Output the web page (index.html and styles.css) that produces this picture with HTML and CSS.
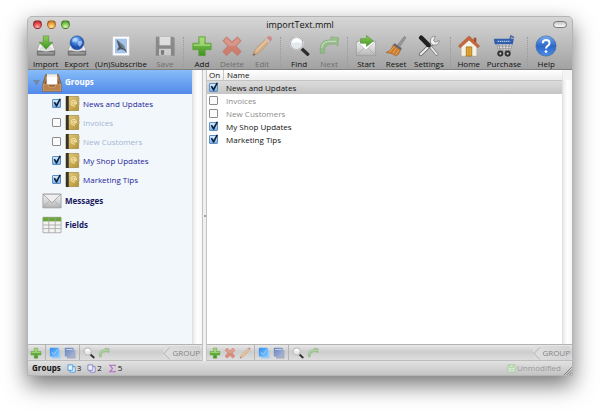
FILE: index.html
```html
<!DOCTYPE html>
<html lang="en">
<head>
<meta charset="utf-8">
<title>importText.mml</title>
<link rel="stylesheet" href="styles.css">
</head>
<body>
<svg class="defs" aria-hidden="true">
  <defs>
    <linearGradient id="gGreen" x2="0" y2="1"><stop offset="0" stop-color="#8fcf5a"/><stop offset="1" stop-color="#3f9424"/></linearGradient>
    <linearGradient id="gMetal" x2="0" y2="1"><stop offset="0" stop-color="#f8f8f8"/><stop offset="1" stop-color="#b4b4b4"/></linearGradient>
    <radialGradient id="gBlue" cx=".45" cy=".3"><stop offset="0" stop-color="#b5dcff"/><stop offset=".5" stop-color="#4a88df"/><stop offset="1" stop-color="#1d4fae"/></radialGradient>
    <linearGradient id="gHelp" x2="0" y2="1"><stop offset="0" stop-color="#78aef0"/><stop offset=".5" stop-color="#2c67c8"/><stop offset="1" stop-color="#4b8ee8"/></linearGradient>
    <linearGradient id="gGold" x2="1" y2="1"><stop offset="0" stop-color="#e4cf85"/><stop offset="1" stop-color="#b6922f"/></linearGradient>
    <linearGradient id="gTray" x2="0" y2="1"><stop offset="0" stop-color="#c08a55"/><stop offset="1" stop-color="#8d5526"/></linearGradient>
    <linearGradient id="gSky" x2="1" y2="1"><stop offset="0" stop-color="#2f8df0"/><stop offset="1" stop-color="#7fc6ff"/></linearGradient>
    <linearGradient id="gSlate" x2="1" y2="1"><stop offset="0" stop-color="#6780b8"/><stop offset="1" stop-color="#a9b8db"/></linearGradient>
  </defs>
  <symbol id="drive" viewBox="0 0 24 24">
    <path d="M5 9h14l3 9H2z" fill="#f4f4f4" stroke="#a5a5a5" stroke-width=".8"/>
    <path d="M2 17h20v4.500q0 1-1 1H3q-1 0-1-1z" fill="#747474"/>
    <path d="M3.500 18.500h17v2.500h-17z" fill="#979797"/>
    <ellipse cx="12" cy="15" rx="7" ry="3" fill="#ddd"/>
  </symbol>
  <symbol id="import" viewBox="0 0 24 24">
    <use href="#drive"/>
    <path d="M9 1h6v7h4.500L12 15.500 4.500 8H9z" fill="url(#gGreen)" stroke="#4c8b2d" stroke-width=".6"/>
  </symbol>
  <symbol id="export" viewBox="0 0 24 24">
    <use href="#drive"/>
    <circle cx="12" cy="8.500" r="7.600" fill="url(#gBlue)" stroke="#244f96" stroke-width=".5"/>
    <path d="M7 4q3-2 5 0l-2 3-3 1zM13 7l4-1 1 3-3 4-2-3z" fill="#d4ebff" opacity=".6"/>
  </symbol>
  <symbol id="stamp" viewBox="0 0 24 24">
    <path d="M3 1.500h18v21H3z" fill="#fff" stroke="#c4c8d0" stroke-width="1.200" stroke-dasharray="1.400 1.100"/>
    <path d="M5.500 4h13v16h-13z" fill="#a4c4e8"/>
    <path d="M7 5l5 4 3 3 3.500 7-4-3-3-.5-4 1.500 2-4z" fill="#4a5564"/>
    <path d="M9 7l6 4 2 5-4-2.500z" fill="#75808f"/>
  </symbol>
  <symbol id="floppy" viewBox="0 0 24 24">
    <path d="M2 2h19l1.500 1.500v19H2z" fill="#6a6a6a"/>
    <path d="M6 2h12v9H6z" fill="#f4f4f4"/>
    <path d="M6 11h12v1H6z" fill="#999"/>
    <path d="M5.500 15h13v7.500h-13z" fill="#ddd"/>
    <path d="M7.500 16.500h3.500v5H7.500z" fill="#555"/>
  </symbol>
  <symbol id="plus" viewBox="0 0 24 24">
    <path d="M8.500 2h7v7H22v7h-6.500v6.500h-7V16H2V9h6.500z" fill="url(#gGreen)" stroke="#5a9f3b" stroke-width=".8"/>
    <path d="M9.500 3h5v7H21v2H3v-2h6.500z" fill="#c0e89a" opacity=".55"/>
  </symbol>
  <symbol id="cross" viewBox="0 0 24 24">
    <path d="M6 2l6 5.500L18 2l4 4.500-5.500 5.500 5.500 6-4 4.500-6-5.500-6 5.500-4-4.500L7.500 12 2 6.500z" fill="#dd5b42" stroke="#c54e3a" stroke-width=".8"/>
    <path d="M6 3.500l6 5.500 6-5.500 2.500 3L15 12H9L3.500 6.500z" fill="#f49a83" opacity=".6"/>
  </symbol>
  <symbol id="pencil" viewBox="0 0 24 24">
    <path d="M2 22.500l2-6L17 3l4 4L8 20z" fill="#eda765" stroke="#b9783e" stroke-width=".7"/>
    <path d="M5.500 17.500L18 5" stroke="#ffd7a4" stroke-width="1.400"/>
    <path d="M17 3l1.500-1.500q2-1 3.500.500t.500 3.500L21 7z" fill="#d9646a"/>
    <path d="M15.500 4.500L17 3l4 4-1.500 1.500z" fill="#ccc"/>
    <path d="M2 22.500l1-3 2 2z" fill="#333"/>
  </symbol>
  <symbol id="lens" viewBox="0 0 24 24">
    <path d="M15 15l6.500 6" stroke="#2d2d2d" stroke-width="3.600" stroke-linecap="round"/>
    <circle cx="9.500" cy="9" r="7.400" fill="#e3e9ec" stroke="#9a9a9a" stroke-width="1.800"/>
    <path d="M4 9q1-5.500 6-5.500 4.500 1 5 5.500-5-2-11 0z" fill="#fff"/>
    <circle cx="9.500" cy="9" r="7.600" fill="none" stroke="#eee" stroke-width=".8"/>
  </symbol>
  <symbol id="redo" viewBox="0 0 24 24">
    <path d="M2.500 20Q1 6 11 5.500h3V2l8.500 1-1 9-3-2.500-3 .5Q7 9 6.500 20z" fill="#7fbf6b" stroke="#559c46" stroke-width=".7"/>
    <path d="M4 14q1-7 8-7h8" fill="none" stroke="#c8eabb" stroke-width="1.200"/>
  </symbol>
  <symbol id="send" viewBox="0 0 24 24">
    <path d="M1.500 7h21v15.500h-21z" fill="url(#gMetal)" stroke="#999" stroke-width=".8"/>
    <path d="M2 22l8-8M22 22l-8-8" stroke="#aaa" stroke-width=".9"/>
    <path d="M1.500 7h21L12 16.500z" fill="#fff" stroke="#aaa" stroke-width=".8"/>
    <path d="M6 4h6.500V.5L20 6.500l-7.500 6V9H6z" fill="url(#gGreen)" stroke="#4c8b2d" stroke-width=".6"/>
  </symbol>
  <symbol id="broom" viewBox="0 0 24 24">
    <path d="M14 10.500l7-9 2 1.500-6.500 9z" fill="#999" stroke="#666" stroke-width=".5"/>
    <path d="M10.500 9l8 5.500-1.500 2L9 11z" fill="#5b6575"/>
    <path d="M9 10.500l8 6q-1 4-5 6.500-3-3-11-4 6-2 8-8.500z" fill="#c97c30" stroke="#9a571b" stroke-width=".5"/>
    <path d="M10 13l-5 5.500M12.500 14.500l-4 5.500M15 16.500l-3.500 5" stroke="#f0b46c" stroke-width=".9"/>
  </symbol>
  <symbol id="tools" viewBox="0 0 24 24">
    <path d="M12 11l8.500 10" stroke="#858585" stroke-width="3.600" stroke-linecap="round"/>
    <path d="M12 11l8.500 10" stroke="#eee" stroke-width="1.800" stroke-linecap="round"/>
    <path d="M3 21l13.500-13" stroke="#666" stroke-width="4" stroke-linecap="round"/>
    <path d="M3 21l13.500-13" stroke="#f0f0f0" stroke-width="2.200" stroke-linecap="round"/>
    <path d="M3.500 3l8 8" stroke="#202020" stroke-width="5" stroke-linecap="round"/>
    <path d="M19 1.500q-5-.5-5.500 5 0 4.500 4.500 4.500 5 0 5-5l-4 2-2-2z" fill="#f0f0f0" stroke="#777" stroke-width=".8"/>
  </symbol>
  <symbol id="home" viewBox="0 0 24 24">
    <path d="M17 3h3v5h-3z" fill="#a6512f"/>
    <path d="M3.500 11L12 4l8.500 7v12h-17z" fill="#f6f1e5" stroke="#b8aa92" stroke-width=".6"/>
    <path d="M0.500 12L12 1l11.500 11-2 2L12 5.500 2.500 14z" fill="#c7683b" stroke="#90401e" stroke-width=".5"/>
    <path d="M9 13h6v10H9z" fill="#e4a72c" stroke="#8e6728" stroke-width=".8"/>
    <path d="M12 13v10" stroke="#b87f24" stroke-width=".6"/>
  </symbol>
  <symbol id="cart" viewBox="0 0 24 24">
    <path d="M18.500 5l1-4 3.500 2" fill="none" stroke="#5270a4" stroke-width="1.800"/>
    <path d="M3.500 8h18L19 17H6z" fill="#dedede" stroke="#888" stroke-width=".7"/>
    <path d="M6 9l2 8M10 9l1 8M14 9v8M18 9l-1 8M5 12h15M6 15h13" stroke="#888" stroke-width=".8"/>
    <path d="M1 5.500q0-1.500 1-1.500h19.500q1.500 0 1 1.500l-1 4.500H2z" fill="#315fae"/>
    <path d="M5 7h14" stroke="#b7cdf0" stroke-width="1.400" stroke-dasharray="1.500 .8"/>
    <circle cx="8" cy="20.300" r="3.300" fill="#333"/><circle cx="16" cy="20.300" r="3.300" fill="#333"/>
    <circle cx="8" cy="20.300" r="1.200" fill="#ccc"/><circle cx="16" cy="20.300" r="1.200" fill="#ccc"/>
  </symbol>
  <symbol id="help" viewBox="0 0 24 24">
    <circle cx="12" cy="12" r="11" fill="url(#gHelp)" stroke="#3a62a8" stroke-width=".7"/>
    <path d="M8.500 9q0-3.500 3.700-3.500T15.800 9q0 1.700-2 2.800-1.700 1-1.700 3" fill="none" stroke="#fff" stroke-width="2.200"/>
    <circle cx="12" cy="18" r="1.500" fill="#fff"/>
  </symbol>
  <symbol id="tray" viewBox="0 0 24 24">
    <path d="M4.500 2.500h15L23 14v8.500H1V14z" fill="url(#gTray)" stroke="#7c4a22" stroke-width=".8"/>
    <path d="M6.500 4h11l3 10.500h-17z" fill="#6a3e1d"/>
    <path d="M6 2h12v5H6z" fill="#eee"/><path d="M5.500 5.500h13v9h-13z" fill="#fff"/>
    <path d="M1.500 14h5.500l1.500 3.500h7L17 14h5.500v8h-21z" fill="#b98350" stroke="#e1bb8c" stroke-width=".7"/>
  </symbol>
  <symbol id="book" viewBox="0 0 16 18">
    <path d="M1 1.500h13.500v15H1z" fill="url(#gGold)" stroke="#8f752c" stroke-width=".6"/>
    <path d="M1 1h3v16H1z" fill="#38332a"/>
    <circle cx="9.300" cy="8.700" r="1.300" fill="none" stroke="#fff3c7" stroke-width=".8"/>
    <path d="M10.600 7.200v2.300q1.600.8 1.700-1-.2-3-3-3-3 .3-3 3.300.3 3 3.300 3h1.200" fill="none" stroke="#fff3c7" stroke-width=".8"/>
    <path d="M14.500 3h1v3h-1zM14.500 7.500h1v3h-1z" fill="#c9bb91"/>
  </symbol>
  <symbol id="mail" viewBox="0 0 22 18">
    <path d="M1 1.500h20v15H1z" fill="url(#gMetal)" stroke="#9b9b9b" stroke-width=".9"/>
    <path d="M1 16.500l7.500-8M21 16.500l-7.500-8" stroke="#aaa" stroke-width=".9"/>
    <path d="M1 1.500h20L11 11z" fill="#eee" stroke="#999" stroke-width=".9"/>
  </symbol>
  <symbol id="grid" viewBox="0 0 22 18">
    <path d="M1 .5h20v17H1z" fill="#f3f3f1" stroke="#999" stroke-width=".8"/>
    <path d="M1 .5h20V5H1z" fill="#6ba53c"/>
    <path d="M1 9h20M1 13h20M7.500 1v16.500M14.500 1v16.500" stroke="#a3a3a3" stroke-width=".9"/>
  </symbol>
  <symbol id="checkall" viewBox="0 0 12 12">
    <path d="M3 3h8.500v8.500H3z" fill="#9bcdf8"/>
    <rect x=".8" y=".8" width="9" height="9" rx="1" fill="url(#gSky)"/>
    <path d="M3 5l2 2.500L9 2" fill="none" stroke="#a8d6fb" stroke-width=".8"/>
  </symbol>
  <symbol id="uncheckall" viewBox="0 0 12 12">
    <path d="M3 3h8.500v8.500H3z" fill="#a5acc2"/>
    <rect x=".8" y=".8" width="9" height="9" rx="1" fill="url(#gSlate)"/>
    <path d="M2 2.500h6.500" stroke="#c4d2ec"/>
  </symbol>
  <symbol id="pages" viewBox="0 0 10 10">
    <path d="M3.500 3h5.500v6H3.500z" fill="#fff" stroke="currentColor"/>
    <path d="M1 1h5.500v6H1z" fill="#e6f2fc" stroke="currentColor"/>
  </symbol>
  <symbol id="sigma" viewBox="0 0 10 10">
    <path d="M8 2.500V1.300H2L5 5 2 8.700h6V7.500" fill="none" stroke="#b26ac8" stroke-width="1.200"/>
  </symbol>
  <symbol id="saved" viewBox="0 0 10 10">
    <path d="M1 1h8v8H1z" fill="#d9ebd4" stroke="#a6cc9e"/>
    <path d="M3 1v3h4V1M3 6.500h4" fill="none" stroke="#a6cc9e"/>
  </symbol>
</svg>

<main class="window">
  <header class="chrome">
    <div class="titlebar">
      <div class="lights">
        <button class="light red" aria-label="Close"></button>
        <button class="light amber" aria-label="Minimize"></button>
        <button class="light green" aria-label="Zoom"></button>
      </div>
      <h1>importText.mml</h1>
      <button class="pill" aria-label="Toggle toolbar"></button>
    </div>
    <nav class="toolbar">
      <button class="tool"><svg><use href="#import"/></svg>Import</button>
      <button class="tool"><svg><use href="#export"/></svg>Export</button>
      <button class="tool"><svg><use href="#stamp"/></svg>(Un)Subscribe</button>
      <button class="tool" disabled><svg><use href="#floppy"/></svg>Save</button>
      <span class="sep"></span>
      <button class="tool"><svg><use href="#plus"/></svg>Add</button>
      <button class="tool" disabled><svg><use href="#cross"/></svg>Delete</button>
      <button class="tool" disabled><svg><use href="#pencil"/></svg>Edit</button>
      <span class="sep"></span>
      <button class="tool"><svg><use href="#lens"/></svg>Find</button>
      <button class="tool" disabled><svg><use href="#redo"/></svg>Next</button>
      <span class="sep"></span>
      <button class="tool"><svg><use href="#send"/></svg>Start</button>
      <button class="tool"><svg><use href="#broom"/></svg>Reset</button>
      <button class="tool"><svg><use href="#tools"/></svg>Settings</button>
      <span class="sep"></span>
      <button class="tool"><svg><use href="#home"/></svg>Home</button>
      <button class="tool"><svg><use href="#cart"/></svg>Purchase</button>
      <span class="sep"></span>
      <button class="tool"><svg><use href="#help"/></svg>Help</button>
    </nav>
  </header>

  <div class="panes">
    <section class="pane source">
      <div class="scroller">
        <div class="tree">
          <div class="branch selected"><span class="arrow"></span><svg class="big"><use href="#tray"/></svg>Groups</div>
          <ul>
            <li><input type="checkbox" id="g1" checked><label for="g1"><svg><use href="#book"/></svg>News and Updates</label></li>
            <li class="off"><input type="checkbox" id="g2"><label for="g2"><svg><use href="#book"/></svg>Invoices</label></li>
            <li class="off"><input type="checkbox" id="g3"><label for="g3"><svg><use href="#book"/></svg>New Customers</label></li>
            <li><input type="checkbox" id="g4" checked><label for="g4"><svg><use href="#book"/></svg>My Shop Updates</label></li>
            <li><input type="checkbox" id="g5" checked><label for="g5"><svg><use href="#book"/></svg>Marketing Tips</label></li>
          </ul>
          <div class="branch"><span class="arrow none"></span><svg class="mid"><use href="#mail"/></svg>Messages</div>
          <div class="branch"><span class="arrow none"></span><svg class="mid"><use href="#grid"/></svg>Fields</div>
        </div>
        <div class="track"></div>
      </div>
      <div class="actions">
        <button aria-label="Add"><svg><use href="#plus"/></svg></button>
        <span class="rule"></span>
        <button aria-label="Check all"><svg><use href="#checkall"/></svg></button>
        <button aria-label="Uncheck all"><svg><use href="#uncheckall"/></svg></button>
        <span class="rule"></span>
        <button aria-label="Find"><svg><use href="#lens"/></svg></button>
        <button aria-label="Next" disabled><svg><use href="#redo"/></svg></button>
        <span class="crumb">GROUP</span>
      </div>
    </section>
    <div class="splitter"></div>
    <section class="pane detail">
      <div class="scroller">
        <div class="list">
          <table>
            <thead><tr><th class="on">On</th><th>Name</th></tr></thead>
            <tbody>
              <tr class="current"><td><input type="checkbox" id="r1" checked></td><td><label for="r1">News and Updates</label></td></tr>
              <tr class="off"><td><input type="checkbox" id="r2"></td><td><label for="r2">Invoices</label></td></tr>
              <tr class="off"><td><input type="checkbox" id="r3"></td><td><label for="r3">New Customers</label></td></tr>
              <tr><td><input type="checkbox" id="r4" checked></td><td><label for="r4">My Shop Updates</label></td></tr>
              <tr><td><input type="checkbox" id="r5" checked></td><td><label for="r5">Marketing Tips</label></td></tr>
            </tbody>
          </table>
        </div>
        <div class="track headed"></div>
      </div>
      <div class="actions">
        <button aria-label="Add"><svg><use href="#plus"/></svg></button>
        <button aria-label="Delete" disabled><svg><use href="#cross"/></svg></button>
        <button aria-label="Edit" disabled><svg><use href="#pencil"/></svg></button>
        <span class="rule"></span>
        <button aria-label="Check all"><svg><use href="#checkall"/></svg></button>
        <button aria-label="Uncheck all"><svg><use href="#uncheckall"/></svg></button>
        <span class="rule"></span>
        <button aria-label="Find"><svg><use href="#lens"/></svg></button>
        <button aria-label="Next" disabled><svg><use href="#redo"/></svg></button>
        <span class="crumb">GROUP</span>
      </div>
    </section>
  </div>

  <footer class="status">
    <strong>Groups</strong>
    <span class="count blue"><svg><use href="#pages"/></svg>3</span>
    <span class="count violet"><svg><use href="#pages"/></svg>2</span>
    <span class="count"><svg><use href="#sigma"/></svg>5</span>
    <span class="state"><svg><use href="#saved"/></svg>Unmodified</span>
    <svg class="grip" viewBox="0 0 10 10"><path d="M1 10l9-9M4 10l6-6M7 10l3-3" stroke="#777" stroke-width="1"/></svg>
  </footer>
</main>
</body>
</html>
```
FILE: styles.css
```css
* { box-sizing: border-box; }

body {
  margin: 0;
  min-height: 100vh;
  display: flex;
  padding: 16px 27px 38px 27px;
  background: #fff;
  color: #111;
  font: 500 8px/12px "Open Sans", "Noto Sans", sans-serif;
}

.defs { position: absolute; width: 0; height: 0; }

button {
  border: 0;
  padding: 0;
  background: none;
  font: inherit;
  color: inherit;
}

.window {
  flex: 1;
  min-width: 0;
  display: flex;
  flex-direction: column;
  border: 1px solid #b4b4b4;
  border-radius: 5px 5px 0 0;
  background: #d0d0d0;
  box-shadow: 0 9px 22px rgba(0, 0, 0, .55);
}

/* Title bar and toolbar */
.chrome {
  border-bottom: 1px solid #808080;
  border-radius: 4px 4px 0 0;
  background: linear-gradient(#d6d6d6, #c2c2c2 40%, #a2a2a2);
}

.titlebar {
  display: grid;
  grid-template-columns: 1fr auto 1fr;
  align-items: center;
  height: 15px;
  padding: 0 5px;
}

.titlebar h1 {
  margin: 0;
  font-size: 9px;
  font-weight: 500;
  line-height: 15px;
}

.lights { display: flex; gap: 5px; }

.light {
  width: 9px;
  height: 9px;
  border: 1px solid rgba(0, 0, 0, .3);
  border-radius: 50%;
}

.red { background: radial-gradient(circle at 50% 85%, #ffb3a8, #e0454c 55%, #a3222d); }
.amber { background: radial-gradient(circle at 50% 85%, #ffeaa0, #ee9c3c 55%, #b0661c); }
.green { background: radial-gradient(circle at 50% 85%, #dcffae, #79c14e 55%, #3f8426); }

.pill {
  justify-self: end;
  width: 14px;
  height: 7px;
  border: 1px solid #777;
  border-radius: 4px;
  background: linear-gradient(#c4c4c4, #fafafa);
}

.toolbar {
  display: flex;
  gap: 6px;
  padding: 3px 5px 0;
}

.tool {
  display: flex;
  flex-direction: column;
  align-items: center;
  min-width: 24px;
  line-height: 11px;
}

.tool svg { width: 22px; height: 22px; margin-bottom: 1px; }
.tool:disabled { color: #6f6f6f; }
.tool:disabled svg { opacity: .6; }

.sep {
  margin: 2px 0;
  border-left: 1px dotted #9a9a9a;
}

/* Panes */
.panes { flex: 1; display: flex; }
.pane { display: flex; flex-direction: column; min-width: 0; }
.source { flex: 0 0 32%; }
.detail { flex: 1; }
.scroller { flex: 1; display: flex; }

.tree { flex: 1; background: #f2f7fc; }

.track {
  width: 10px;
  border-left: 1px solid #e0e0e0;
  background: linear-gradient(90deg, #eaeaea, #fff 50%, #f7f7f7);
}

.headed { border-top: 10px solid #f4f4f4; }

.splitter {
  display: flex;
  align-items: center;
  justify-content: center;
  width: 5px;
  border: solid #c4c4c4;
  border-width: 0 1px;
  background: #f0f0f0;
}

.splitter::before {
  content: "";
  width: 2px;
  height: 2px;
  border-radius: 50%;
  background: #888;
}

.branch {
  display: flex;
  align-items: center;
  height: 24px;
  padding-left: 5px;
  color: #17175e;
  font-weight: 700;
}

.selected {
  height: 24px;
  background: linear-gradient(#86bdf8, #5289ea);
  color: #fff;
}

.arrow {
  width: 7px;
  margin-right: 2px;
  border: solid transparent;
  border-width: 5px 3px 0;
  border-top-color: #7089a9;
}

.none { border-top-color: transparent; }
.big { width: 20px; height: 21px; margin-right: 3px; }
.mid { width: 20px; height: 18px; margin-right: 3px; }

.tree ul { margin: 0; padding: 0; list-style: none; }

.tree li {
  display: flex;
  align-items: center;
  gap: 4px;
  height: 19px;
  padding-left: 24px;
  color: #1c1c98;
}

.tree label { display: flex; align-items: center; gap: 3px; }
.tree label svg { width: 15px; height: 17px; }
.tree .off { color: #a3b5d1; }

input[type="checkbox"] {
  appearance: none;
  position: relative;
  display: block;
  width: 9px;
  height: 9px;
  margin: 0;
  border: 1px solid #8c8c8c;
  border-radius: 1px;
  background: #fbfbfb;
}

input[type="checkbox"]:checked {
  border-color: #5b8dc2;
  background: linear-gradient(#d8ecfd, #79b1e7);
}

input[type="checkbox"]:checked::after {
  content: "";
  position: absolute;
  inset: -2px -1px 0 0;
  background: #10213c;
  clip-path: polygon(8% 50%, 24% 42%, 43% 66%, 82% 6%, 100% 10%, 50% 96%, 38% 96%);
}

.list { flex: 1; background: #fff; }
table { width: 100%; border-spacing: 0; table-layout: fixed; }
th, td { padding: 0; text-align: left; }

th {
  height: 11px;
  padding-left: 3px;
  border-bottom: 1px solid #c4c4c4;
  background: linear-gradient(#fff, #eee);
  font-weight: 500;
  line-height: 10px;
}

.on { width: 17px; padding-left: 2px; border-right: 1px solid #c8c8c8; }
td { height: 13px; padding-left: 2px; }
td label { display: block; }
.current { background: linear-gradient(#dcdcdc, #c5c5c5); }
.list .off { color: #8c8c8c; }

/* Action bars */
.actions {
  display: flex;
  align-items: center;
  height: 17px;
  padding: 0 2px;
  gap: 3px;
  border-top: 1px solid #b3b3b3;
  border-bottom: 1px solid #bdbdbd;
  background: linear-gradient(#e8e8e8, #cdcdcd 45%, #dedede);
}

.actions button, .actions svg { display: block; width: 12px; height: 12px; }
.actions button:disabled { opacity: .6; }
.rule { align-self: stretch; border-left: 1px solid #b4b4b4; }

.crumb {
  position: relative;
  margin-left: auto;
  padding-left: 9px;
  border-radius: 6px 0 0 6px;
  background: linear-gradient(90deg, #dedede, #d4d4d4);
  color: #858585;
  line-height: 14px;
}

.crumb::before {
  content: "";
  position: absolute;
  left: 2px;
  top: 3px;
  width: 8px;
  height: 8px;
  border: solid #bbb;
  border-width: 0 0 1px 1px;
  transform: rotate(45deg);
}

/* Status bar */
.status {
  display: flex;
  align-items: center;
  gap: 6px;
  height: 14px;
  padding-left: 4px;
  background: linear-gradient(#e2e2e2, #c4c4c4);
}

.status svg { width: 9px; height: 9px; }
.count, .state { display: flex; align-items: center; gap: 1px; }
.blue svg { color: #4296e0; }
.violet svg { color: #8679c4; }
.state { margin-left: auto; color: #999; }
.status .grip { align-self: flex-end; margin-left: -4px; }
```
